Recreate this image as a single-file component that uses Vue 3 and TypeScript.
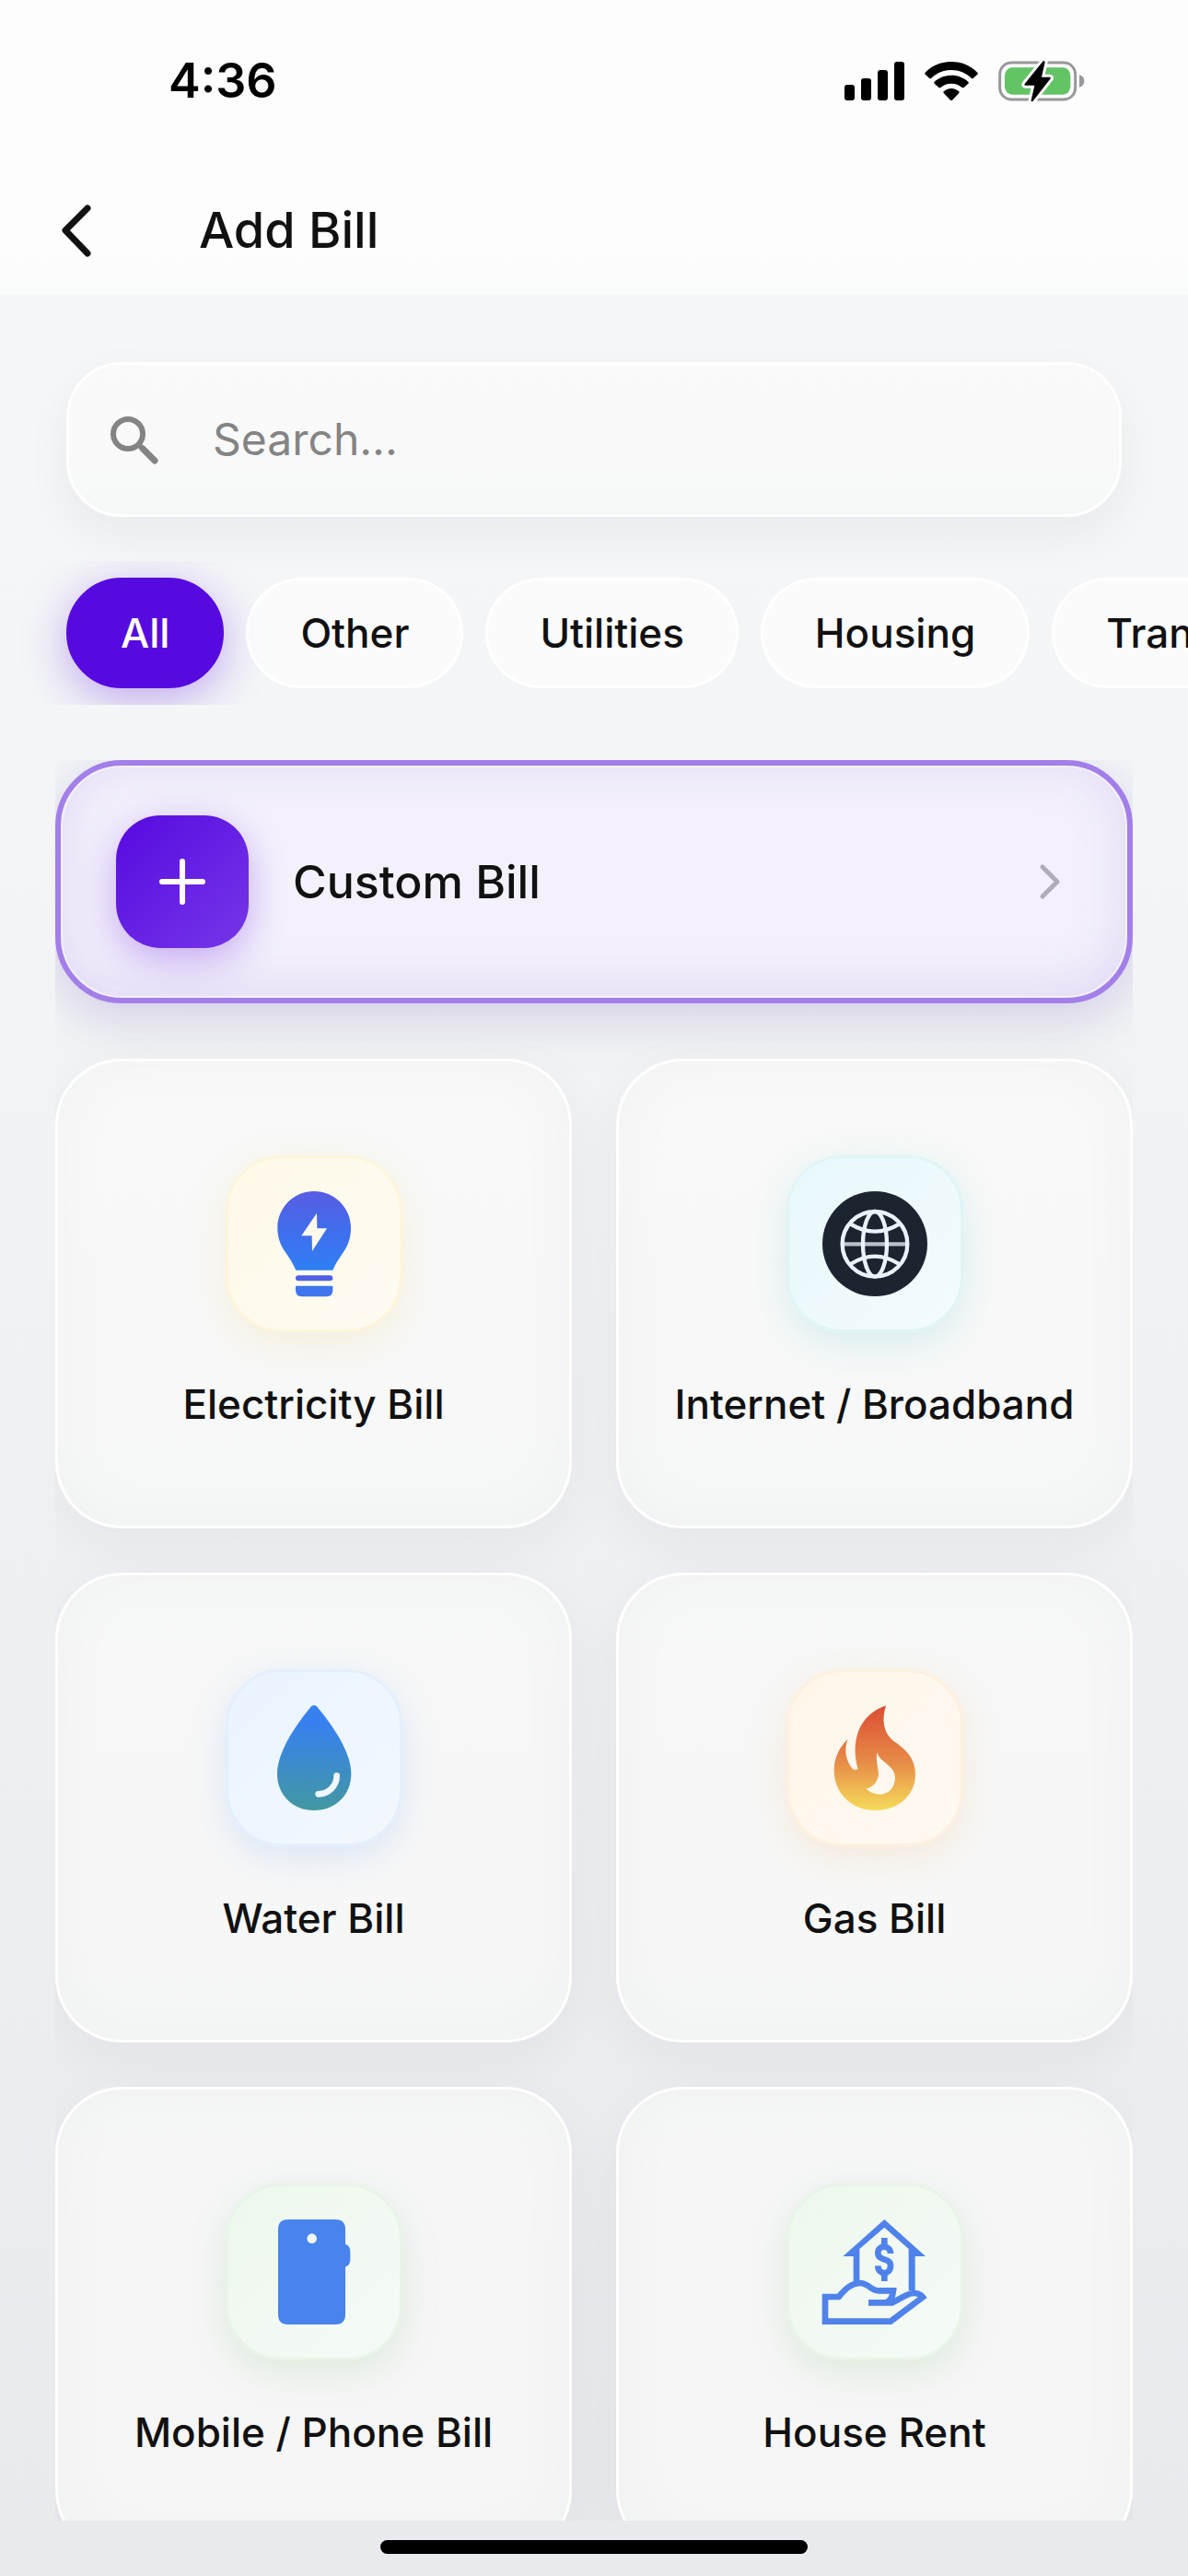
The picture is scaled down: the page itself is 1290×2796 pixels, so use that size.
<script setup lang="ts">
import { ref } from 'vue'

type IconName = 'bulb' | 'globe' | 'drop' | 'flame' | 'phone' | 'house'

interface Bill {
  name: string
  icon: IconName
  tone: string
}

const query = ref('')
const active = ref('All')
const categories: string[] = ['All', 'Other', 'Utilities', 'Housing', 'Transport']

const bills: Bill[] = [
  { name: 'Electricity Bill', icon: 'bulb', tone: 'yellow' },
  { name: 'Internet / Broadband', icon: 'globe', tone: 'cyan' },
  { name: 'Water Bill', icon: 'drop', tone: 'blue' },
  { name: 'Gas Bill', icon: 'flame', tone: 'orange' },
  { name: 'Mobile / Phone Bill', icon: 'phone', tone: 'green' },
  { name: 'House Rent', icon: 'house', tone: 'green' },
]
</script>

<template>
  <div class="screen">
    <header class="top">
      <div class="status">
        <span class="time">4:36</span>
        <div class="status-icons">
          <svg width="65" height="42" viewBox="0 0 65 42" aria-hidden="true">
            <rect x="0" y="25" width="11" height="17" rx="3" />
            <rect x="18" y="18" width="11" height="24" rx="3" />
            <rect x="36" y="9" width="11" height="33" rx="3" />
            <rect x="54" y="0" width="11" height="42" rx="3" />
          </svg>
          <svg width="58" height="42" viewBox="0 0 174 126" aria-hidden="true">
            <path d="M87 0 C122 0 152 14 172 35 Q175 38 172 41 L158 54 Q155 56 152 53 C135 36 112 27 87 27 C62 27 39 36 22 53 Q19 56 16 54 L2 41 Q-1 38 2 35 C22 14 52 0 87 0Z" />
            <path d="M87 44 C109 44 128 52 142 65 Q145 68 142 71 L128 84 Q125 86 122 84 C112 75 100 71 87 71 C74 71 62 75 52 84 Q49 86 46 84 L32 71 Q29 68 32 65 C46 52 65 44 87 44Z" />
            <path d="M87 87 C97 87 105 91 112 97 Q114 99 112 102 L90 125 Q87 127 84 125 L62 102 Q60 99 62 97 C69 91 77 87 87 87Z" />
          </svg>
          <svg class="battery" width="94" height="46" viewBox="0 0 282 138" aria-hidden="true">
            <rect x="5" y="9" width="246" height="120" rx="38" fill="none" stroke="#98989d" stroke-width="9" />
            <path d="M264 49 Q280 53 280 69 Q280 85 264 89Z" fill="#98989d" />
            <rect x="21" y="25" width="214" height="88" rx="25" fill="#63c466" />
            <path d="M146 4 L86 78 Q83 83 89 83 H118 L107 132 Q107 138 113 134 L170 61 Q173 56 167 56 H141 L152 8 Q151 1 146 4Z" stroke="#fdfdfd" stroke-width="18" stroke-linejoin="round" fill="#fdfdfd" />
            <path d="M146 4 L86 78 Q83 83 89 83 H118 L107 132 Q107 138 113 134 L170 61 Q173 56 167 56 H141 L152 8 Q151 1 146 4Z" fill="#000" />
          </svg>
        </div>
      </div>
      <div class="bar">
        <button class="back" type="button" aria-label="Back">
          <svg width="33" height="57" viewBox="0 0 33 57" aria-hidden="true">
            <path d="M29 4 L5 28 L29 53" fill="none" stroke="#111" stroke-width="7" stroke-linecap="round" stroke-linejoin="round" />
          </svg>
        </button>
        <h1 class="title">Add Bill</h1>
      </div>
    </header>

    <label class="search">
      <svg width="51" height="51" viewBox="0 0 51 51" aria-hidden="true">
        <circle cx="19" cy="19" r="16" fill="none" stroke="#848484" stroke-width="6" />
        <path d="M35 35 L48 48" stroke="#848484" stroke-width="7" stroke-linecap="round" />
        <path d="M30 30 L36 36" stroke="#848484" stroke-width="6" />
      </svg>
      <input v-model="query" class="search-input" type="text" placeholder="Search..." aria-label="Search bills" />
    </label>

    <nav class="chips" aria-label="Categories">
      <button
        v-for="category in categories"
        :key="category"
        type="button"
        class="chip"
        :class="{ active: active === category }"
        @click="active = category"
      >{{ category }}</button>
    </nav>

    <main class="list">
      <button class="custom" type="button">
        <span class="plus">
          <svg width="50" height="50" viewBox="0 0 50 50" aria-hidden="true">
            <path d="M25 3 V47 M3 25 H47" stroke="#fff" stroke-width="6" stroke-linecap="round" />
          </svg>
        </span>
        <span class="custom-label">Custom Bill</span>
        <svg width="24" height="40" viewBox="0 0 24 40" aria-hidden="true">
          <path d="M4 4 L20 20 L4 36" fill="none" stroke="#b0adb8" stroke-width="5" stroke-linecap="round" stroke-linejoin="round" />
        </svg>
      </button>

      <div class="grid">
        <button v-for="bill in bills" :key="bill.name" type="button" class="card">
          <span class="tile" :class="bill.tone">
            <svg width="114" height="114" viewBox="0 0 342 342" aria-hidden="true">
              <template v-if="bill.icon === 'bulb'">
                <defs>
                  <linearGradient id="bulb-fill" x1="0" y1="0" x2="0" y2="1">
                    <stop offset="0" stop-color="#585ce4" />
                    <stop offset="0.5" stop-color="#406eec" />
                    <stop offset="1" stop-color="#2f7ff4" />
                  </linearGradient>
                </defs>
                <path
                  fill="url(#bulb-fill)"
                  fill-rule="evenodd"
                  d="M171 0 C237 0 291 53 291 119 C291 150 282 176 268 196 C252 220 240 238 232 257 H112 C103 236 90 216 76 196 C62 176 52 150 52 119 C52 53 105 0 171 0Z M180 71 L130 145 H164 L165 195 L213 121 H181Z"
                />
                <rect x="111" y="274" width="121" height="18" rx="9" fill="#4f60e4" />
                <path d="M111 308 H232 V322 Q232 343 211 343 H132 Q111 343 111 322Z" fill="#3d76ee" />
              </template>

              <template v-else-if="bill.icon === 'globe'">
                <circle cx="171" cy="171" r="171" fill="#1c242f" />
                <g fill="none" stroke="#eaf3fd" stroke-width="13">
                  <path d="M64 172 H278" stroke="#b9c1cb" />
                  <circle cx="171" cy="172" r="106" />
                  <ellipse cx="171" cy="172" rx="39" ry="106" />
                  <path d="M92 107 Q171 155 250 107" />
                  <path d="M92 237 Q171 187 250 237" />
                </g>
              </template>

              <template v-else-if="bill.icon === 'drop'">
                <defs>
                  <linearGradient id="drop-fill" x1="0" y1="0" x2="0" y2="1">
                    <stop offset="0.15" stop-color="#3680f0" />
                    <stop offset="1" stop-color="#4398a2" />
                  </linearGradient>
                </defs>
                <path fill="url(#drop-fill)" d="M162 4 Q171 -4 180 4 C215 45 292 145 292 222 C292 295 238 342 171 342 C104 342 51 295 51 222 C51 145 127 45 162 4Z" />
                <path d="M245 229 C245 262 219 289 185 289" fill="none" stroke="#f1f7fe" stroke-width="20" stroke-linecap="round" />
              </template>

              <template v-else-if="bill.icon === 'flame'">
                <defs>
                  <linearGradient id="flame-fill" x1="0" y1="0" x2="0" y2="1">
                    <stop offset="0" stop-color="#dc4c34" />
                    <stop offset="0.55" stop-color="#e78d48" />
                    <stop offset="1" stop-color="#f5dc5a" />
                  </linearGradient>
                </defs>
                <path
                  fill="url(#flame-fill)"
                  fill-rule="evenodd"
                  d="M207 1 C193 45 198 87 228 113 C258 135 303 162 303 225 C303 290 250 342 173 342 C95 342 38 285 38 212 C38 165 60 132 83 110 C70 140 74 178 99 208 Q108 212 116 208 C90 115 120 30 207 1Z M179 154 C172 180 182 198 183 222 C183 245 165 268 142 271 C152 282 168 290 187 290 C212 290 237 270 237 236 C237 195 185 185 179 154Z"
                />
              </template>

              <template v-else-if="bill.icon === 'phone'">
                <path
                  fill="#4883ee"
                  fill-rule="evenodd"
                  d="M86 0 H241 Q273 0 273 32 V80 Q289 86 289 104 V131 Q289 149 273 154 V310 Q273 342 241 342 H86 Q54 342 54 310 V32 Q54 0 86 0Z M164 46 A16 16 0 1 0 164 78 A16 16 0 1 0 164 46Z"
                />
              </template>

              <template v-else>
                <path fill="#4f82ea" d="M202 0 L336 120 H302 V232 H281 V96 L202 26 L121 96 V204 H101 V120 H67Z" />
                <g fill="none" stroke="#4f82ea" stroke-width="20">
                  <path d="M222 111 C222 82 181 82 181 109 C181 138 222 122 222 151 C222 182 181 182 181 151" />
                  <path d="M202 60 V90 M202 172 V201" />
                  <path d="M150 271 H228 C256 258 276 240 298 240 C312 240 322 246 327 253 L222 332 H9 V252 H53 C76 225 95 207 122 207 C150 207 158 232 183 232 H231 C229 252 222 266 206 271" />
                </g>
              </template>
            </svg>
          </span>
          <span class="card-label">{{ bill.name }}</span>
        </button>
      </div>
    </main>

    <footer class="home"><span class="indicator"></span></footer>
  </div>
</template>

<style>
body {
  margin: 0;
}
</style>

<style scoped>
.screen {
  display: flex;
  flex-direction: column;
  height: 100vh;
  overflow: hidden;
  background: linear-gradient(#f7f8f9, #f3f5f7 30%, #e9eaee);
  color: #111;
  font-family: Inter, 'Liberation Sans', sans-serif;
}

.screen * {
  box-sizing: border-box;
}

button {
  margin: 0;
  padding: 0;
  border: 0;
  background: none;
  color: inherit;
  font-family: inherit;
  cursor: pointer;
}

svg {
  display: block;
  flex: none;
  overflow: visible;
}

.top {
  flex: none;
  background: linear-gradient(#fdfdfd 84%, #fafbfb);
}

.status {
  display: flex;
  align-items: center;
  justify-content: space-between;
  height: 176px;
  padding: 0 112px 0 183px;
}

.time {
  color: #000;
  font-size: 52px;
  font-weight: 600;
  line-height: 60px;
}

.status-icons {
  display: flex;
  align-items: center;
  gap: 22px;
}

.bar {
  display: flex;
  align-items: center;
  height: 144px;
  padding: 4px 66px 0;
}

.back {
  margin-right: 117px;
}

.title {
  margin: 0;
  font-size: 54px;
  font-weight: 500;
  line-height: 60px;
}

.search {
  display: flex;
  flex: none;
  align-items: center;
  gap: 60px;
  height: 168px;
  margin: 73px 72px 0;
  padding: 0 45px;
  border: 3px solid #fff;
  border-radius: 60px;
  background: linear-gradient(#fafafa, #f9f9fa 60%, #f6f8f7);
  box-shadow: 0 18px 48px rgba(40, 45, 60, 0.06);
}

.search-input {
  flex: 1;
  min-width: 0;
  padding: 0;
  border: 0;
  outline: 0;
  background: none;
  color: #111;
  font-family: inherit;
  font-size: 48px;
  line-height: 60px;
}

.search-input::placeholder {
  color: #848484;
  opacity: 1;
}

.chips {
  display: flex;
  flex: none;
  gap: 24px;
  margin-top: 48px;
  padding: 18px 72px;
  overflow: hidden;
}

.chip {
  flex: none;
  height: 120px;
  padding: 0 56px;
  border: 3px solid rgba(255, 255, 255, 0.8);
  border-radius: 60px;
  background: rgba(255, 255, 255, 0.6);
  font-size: 44px;
  font-weight: 500;
  line-height: 60px;
}

.chip.active {
  border-color: #560ae0;
  background: #560ae0;
  box-shadow: 0 12px 48px rgba(98, 20, 224, 0.34);
  color: #fff;
}

.list {
  flex: 1;
  min-height: 0;
  margin: 60px 60px 0;
  overflow: hidden;
}

.custom {
  display: flex;
  align-items: center;
  width: 100%;
  height: 264px;
  padding: 0 72px 0 60px;
  border: 6px solid #a37fe9;
  border-radius: 72px;
  background: #f4f1fc;
  box-shadow:
    inset 0 0 0 2px rgba(255, 255, 255, 0.5),
    inset 0 -8px 60px rgba(98, 60, 190, 0.14),
    0 12px 48px rgba(98, 40, 210, 0.14),
    0 24px 72px rgba(30, 35, 40, 0.05);
}

.plus {
  display: flex;
  align-items: center;
  justify-content: center;
  width: 144px;
  height: 144px;
  border-radius: 48px;
  background: linear-gradient(135deg, #560ae0, #7636e8);
  box-shadow: 0 12px 42px rgba(98, 20, 224, 0.32);
}

.custom-label {
  flex: 1;
  margin-left: 48px;
  font-size: 50px;
  font-weight: 500;
  line-height: 60px;
  text-align: left;
}

.grid {
  display: grid;
  grid-template-columns: 1fr 1fr;
  gap: 48px;
  margin-top: 60px;
}

.card {
  display: flex;
  flex-direction: column;
  align-items: center;
  justify-content: center;
  gap: 48px;
  height: 510px;
  border: 3px solid rgba(255, 255, 255, 0.9);
  border-radius: 72px;
  background: rgba(251, 251, 250, 0.7);
  box-shadow:
    inset 0 -6px 72px rgba(40, 55, 70, 0.03),
    0 18px 60px rgba(30, 35, 40, 0.05);
}

.card-label {
  font-size: 44px;
  font-weight: 500;
  line-height: 60px;
}

.tile {
  display: flex;
  align-items: center;
  justify-content: center;
  width: 192px;
  height: 192px;
  border: 3px solid;
  border-radius: 60px;
}

.yellow {
  border-color: #fdf5da;
  background: linear-gradient(135deg, #fef9e8, #fefbf2);
  box-shadow: 0 12px 42px rgba(240, 200, 80, 0.17);
}

.cyan {
  border-color: #e0f5f5;
  background: linear-gradient(135deg, #e8f8fb, #f3fbfd);
  box-shadow: 0 12px 42px rgba(60, 190, 200, 0.17);
}

.blue {
  border-color: #e3effc;
  background: linear-gradient(135deg, #eaf4fe, #f3f8fe);
  box-shadow: 0 12px 42px rgba(80, 150, 240, 0.16);
}

.orange {
  border-color: #fdf0de;
  background: linear-gradient(135deg, #fff6e9, #fef9f2);
  box-shadow: 0 12px 42px rgba(240, 170, 80, 0.17);
}

.green {
  border-color: #e9f4e9;
  background: linear-gradient(135deg, #eef8ee, #f5faf6);
  box-shadow: 0 12px 42px rgba(90, 170, 90, 0.15);
}

.home {
  display: flex;
  flex: none;
  justify-content: center;
  height: 60px;
  padding-top: 21px;
}

.indicator {
  width: 36%;
  height: 15px;
  border-radius: 8px;
  background: #000;
}
</style>
